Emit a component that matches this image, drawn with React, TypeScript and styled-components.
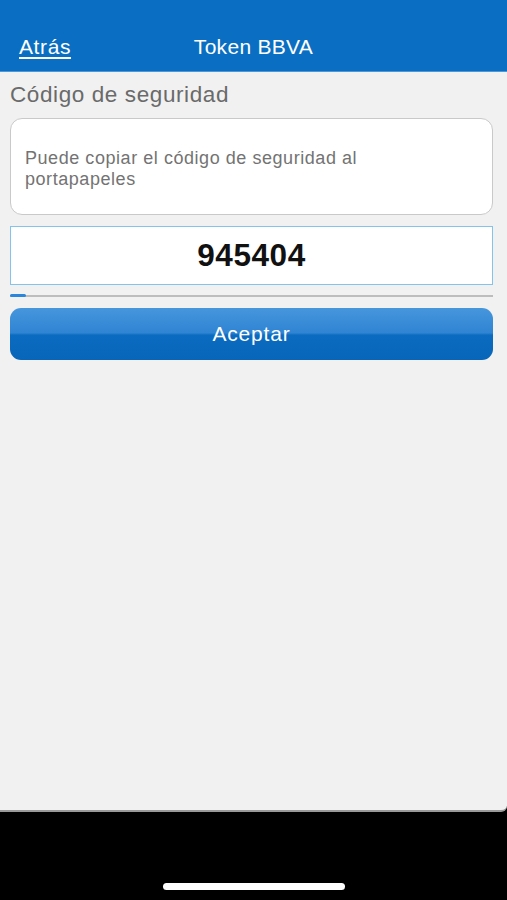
import styled, { createGlobalStyle } from "styled-components";

const GlobalStyle = createGlobalStyle`
  html, body {
    margin: 0;
    padding: 0;
    background: #000;
  }
  body {
    font-family: "Liberation Sans", Arial, sans-serif;
  }
`;

const Screen = styled.div`
  display: flex;
  flex-direction: column;
  width: 507px;
  height: 900px;
  background: #000;
`;

const Header = styled.header`
  position: relative;
  display: flex;
  align-items: center;
  height: 72px;
  padding: 22px 19px 0;
  box-sizing: border-box;
  background: #0a6fc2;
  border-bottom: 1.5px solid #4f97d8;
`;

const BackLink = styled.a`
  color: #fff;
  font-size: 21px;
  letter-spacing: 0.6px;
  text-decoration: underline;
  text-underline-offset: 3px;
  text-decoration-thickness: 1.5px;
  cursor: pointer;
`;

const Title = styled.h1`
  position: absolute;
  left: 0;
  right: 0;
  top: 22px;
  bottom: 0;
  margin: 0;
  display: flex;
  align-items: center;
  justify-content: center;
  color: #fff;
  font-size: 21px;
  font-weight: 400;
  letter-spacing: 0.3px;
  pointer-events: none;
`;

const Content = styled.main`
  flex: 1;
  display: flex;
  flex-direction: column;
  padding: 10px 14px 0 10px;
  background: #f1f1f1;
  border-bottom: 2px solid #9a9a9a;
  border-bottom-right-radius: 6px;
`;

const SectionLabel = styled.h2`
  margin: 0;
  font-size: 22.5px;
  line-height: 26px;
  font-weight: 400;
  letter-spacing: 0.6px;
  color: #6a6a6a;
`;

const InfoCard = styled.div`
  display: flex;
  align-items: center;
  height: 97px;
  margin-top: 10px;
  padding: 4px 14px 0;
  box-sizing: border-box;
  background: #fff;
  border: 1px solid #c9c9c9;
  border-radius: 12px;
`;

const InfoText = styled.p`
  margin: 0;
  max-width: 380px;
  font-size: 18px;
  line-height: 21px;
  letter-spacing: 0.55px;
  color: #737373;
`;

const CodeBox = styled.div`
  display: flex;
  align-items: center;
  justify-content: center;
  height: 59px;
  margin-top: 11px;
  box-sizing: border-box;
  background: #fff;
  border: 1.5px solid #82c4ec;
  font-size: 31.5px;
  font-weight: 700;
  letter-spacing: 0.6px;
  color: #111;
`;

const Track = styled.div`
  position: relative;
  height: 2px;
  margin-top: 10px;
  background: #bdbdbd;
`;

const Fill = styled.div`
  position: absolute;
  left: 0;
  top: -1px;
  height: 3px;
  border-radius: 2px;
  background: #2a86dc;
`;

const AcceptButton = styled.button`
  height: 52px;
  margin-top: 11px;
  border: none;
  border-radius: 11px;
  background: linear-gradient(
    to bottom,
    #4696dc 0%,
    #2f84d3 48%,
    #0b6bc0 52%,
    #0766b9 100%
  );
  color: #fff;
  font-family: "Liberation Sans", Arial, sans-serif;
  font-size: 21px;
  font-weight: 400;
  letter-spacing: 0.8px;
  cursor: pointer;
`;

const HomeArea = styled.footer`
  display: flex;
  align-items: flex-end;
  justify-content: center;
  height: 88px;
  padding-bottom: 10px;
  box-sizing: border-box;
`;

const HomeIndicator = styled.div`
  width: 182px;
  height: 7px;
  border-radius: 4px;
  background: #fff;
`;

export default function App() {
  const progress = 16;
  return (
    <>
      <GlobalStyle />
      <Screen>
        <Header>
          <BackLink>Atrás</BackLink>
          <Title>Token BBVA</Title>
        </Header>
        <Content>
          <SectionLabel>Código de seguridad</SectionLabel>
          <InfoCard>
            <InfoText>
              Puede copiar el código de seguridad al portapapeles
            </InfoText>
          </InfoCard>
          <CodeBox>945404</CodeBox>
          <Track>
            <Fill style={{ width: `${progress}px` }} />
          </Track>
          <AcceptButton>Aceptar</AcceptButton>
        </Content>
        <HomeArea>
          <HomeIndicator />
        </HomeArea>
      </Screen>
    </>
  );
}
